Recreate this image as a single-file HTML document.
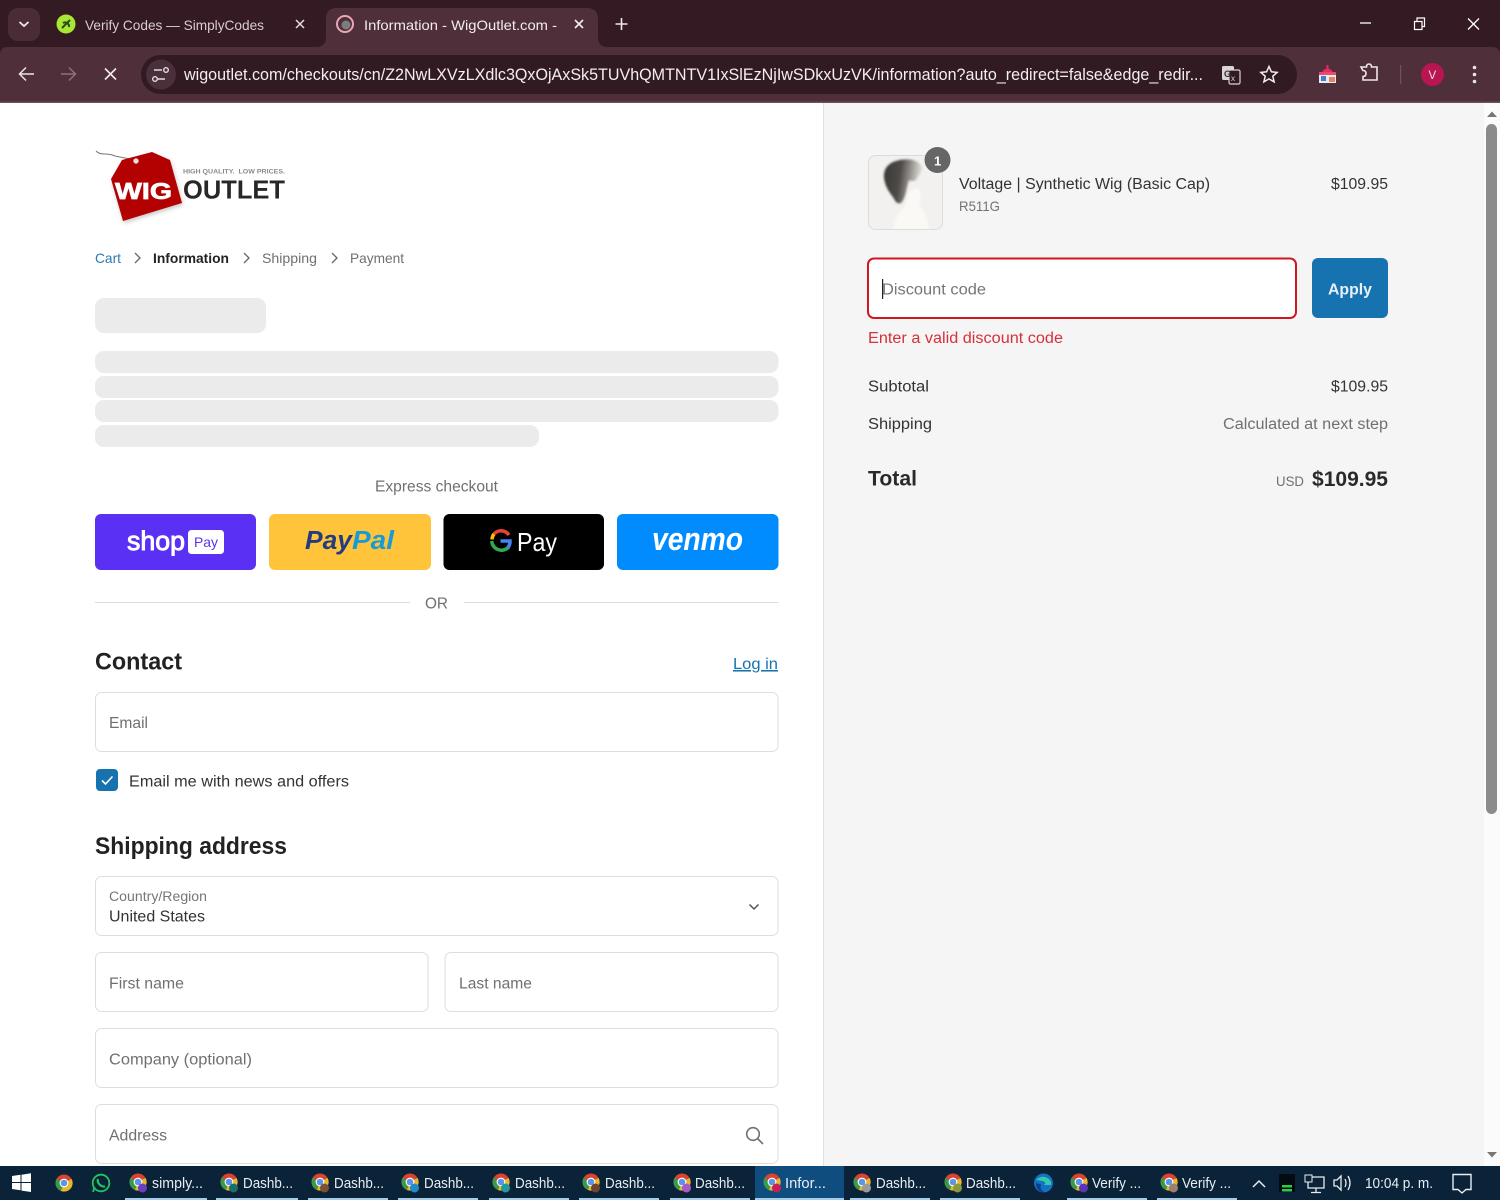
<!DOCTYPE html>
<html lang="en"><head><meta charset="utf-8"><title>Information - WigOutlet.com</title>
<style>
html,body{margin:0;padding:0;width:1500px;height:1200px;overflow:hidden;background:#fff}
svg{display:block}
text{font-family:"Liberation Sans",sans-serif;white-space:pre}
.m{fill:#fff;font-size:14px}
.t{font-size:15.5px;fill:#333}
.g{font-size:15.5px;fill:#707070}
.tb{font-size:14.5px;fill:#e8edf2}
</style></head><body>
<svg width="1500" height="1200" viewBox="0 0 1500 1200" xmlns="http://www.w3.org/2000/svg">
<defs>
<symbol id="ch" viewBox="0 0 18 18">
<circle cx="9" cy="9" r="8.5" fill="#d9432f"/>
<path d="M9 9 L1.6 4.8 A8.5 8.5 0 0 0 6 17 Z" fill="#3a9a4a"/>
<path d="M9 9 L16.6 5 A8.5 8.5 0 0 1 6 17 Z" fill="#eab62c"/>
<circle cx="9" cy="9" r="4.4" fill="#fff"/><circle cx="9" cy="9" r="3.3" fill="#5d95e6"/>
</symbol>
<linearGradient id="hair" x1="0" y1="0" x2="1" y2="0.15">
<stop offset="0" stop-color="#3a3735"/><stop offset=".45" stop-color="#4e4a47"/><stop offset=".75" stop-color="#a29e99"/><stop offset="1" stop-color="#e8e6e2"/>
</linearGradient>
<filter id="soft" x="-10%" y="-10%" width="120%" height="120%"><feGaussianBlur stdDeviation="1"/></filter>
<filter id="shadow" x="-10%" y="-10%" width="125%" height="125%"><feGaussianBlur stdDeviation="2"/></filter>
<clipPath id="thumb"><rect x="869" y="156" width="73" height="73" rx="6.500"/></clipPath>
</defs>

<!-- browser chrome -->
<rect width="1500" height="103" fill="#341a22"/>
<path d="M0 103V55q0-8 8-8h1484q8 0 8 8v48z" fill="#4f2f39"/>
<rect x="0" y="101.500" width="1500" height="1.500" fill="#6b5058"/>
<rect x="8" y="8" width="32" height="33" rx="10" fill="#4a2c36"/>
<path d="M19.500 22l4.500 4 4.500-4" fill="none" stroke="#f0e8ea" stroke-width="1.800"/>
<circle cx="66" cy="24" r="9.500" fill="#a8e832"/>
<path d="M62 28l8-8M63 23a4 4 0 0 1 6 4" fill="none" stroke="#2b4a22" stroke-width="2"/>
<text x="85" y="30" class="m" style="fill:#d9cdd1" textLength="179" lengthAdjust="spacingAndGlyphs">Verify Codes — SimplyCodes</text>
<path d="M296 20l8 8M304 20l-8 8" stroke="#e6dcdf" stroke-width="1.500"/>
<path d="M316 47q10 0 10-10V19q0-11 11-11h250q11 0 11 11v18q0 10 10 10z" fill="#4f2f39"/>
<circle cx="345" cy="24" r="8" fill="none" stroke="#eaa6b5" stroke-width="2"/>
<circle cx="346" cy="25" r="4.500" fill="#7b7c80"/>
<text x="364" y="30" class="m" style="fill:#f2ecee" textLength="193" lengthAdjust="spacingAndGlyphs">Information - WigOutlet.com -</text>
<path d="M575 20l8 8M583 20l-8 8" stroke="#f2ecee" stroke-width="1.600"/>
<path d="M621.500 18v12M615.500 24h12" stroke="#efe7e9" stroke-width="1.600"/>
<path d="M1360 23h11" stroke="#fff" stroke-width="1.300"/>
<path d="M1414.500 21.500h7.500v8h-7.500zM1417 21v-3h7.500v8.500h-2.500" fill="none" stroke="#fff" stroke-width="1.200"/>
<path d="M1468 18.500l11 11M1479 18.500l-11 11" stroke="#fff" stroke-width="1.300"/>

<path d="M34 74H20M26 67.500l-6.500 6.500 6.500 6.500" fill="none" stroke="#ece4e6" stroke-width="1.500"/>
<path d="M61 74h14M69 67.500l6.500 6.500-6.500 6.500" fill="none" stroke="#8a727a" stroke-width="1.500"/>
<path d="M105 68.500l11 11M116 68.500l-11 11" stroke="#f0e9eb" stroke-width="1.600"/>
<rect x="141" y="55" width="1156" height="39" rx="19.500" fill="#321a22"/>
<circle cx="161" cy="74.500" r="15" fill="#4a303a"/>
<path d="M154 70h8M157 79h8" stroke="#e5dde0" stroke-width="1.500"/>
<circle cx="166" cy="70" r="2.300" fill="none" stroke="#e5dde0" stroke-width="1.400"/>
<circle cx="155" cy="79" r="2.300" fill="none" stroke="#e5dde0" stroke-width="1.400"/>
<text x="184" y="80" style="fill:#f3eef0;font-size:16.500px" textLength="1019" lengthAdjust="spacingAndGlyphs">wigoutlet.com/checkouts/cn/Z2NwLXVzLXdlc3QxOjAxSk5TUVhQMTNTV1IxSlEzNjIwSDkxUzVK/information?auto_redirect=false&amp;edge_redir...</text>
<rect x="1222" y="66" width="12" height="14" rx="1.500" fill="#d9d4d5"/>
<rect x="1229" y="70" width="11" height="14" rx="1.500" fill="#321a22" stroke="#d9d4d5" stroke-width="1.200"/>
<text x="1224" y="77" style="font-size:9px;fill:#3a2a30;font-weight:bold">G</text>
<text x="1231" y="81" style="font-size:8px;fill:#d9d4d5">x</text>
<path d="M1269 66.500l2.400 5.300 5.700.6-4.300 3.800 1.300 5.700-5.100-3-5.100 3 1.300-5.700-4.300-3.800 5.700-.6z" fill="none" stroke="#f2ecee" stroke-width="1.500"/>
<rect x="1319" y="72" width="17" height="11" fill="#e7ecf4"/><rect x="1319" y="72" width="17" height="3" fill="#e84a70"/>
<rect x="1321" y="76" width="5" height="5" fill="#4b7bd1"/><rect x="1329" y="77" width="6" height="5" fill="#e8845a"/>
<path d="M1327.500 65v7M1323 72q4.500-5 9 0" stroke="#e62a62" fill="#e62a62" stroke-width="2"/>
<path d="M1362 68h5.500q0-3 2.500-3t2.500 3h5.500v13h-14v-3.500q3 0 3-3t-3-3z" transform="translate(-1 -1)" fill="none" stroke="#eee7e9" stroke-width="1.600"/>
<rect x="1400" y="65" width="1.300" height="19" fill="#6d525b"/>
<circle cx="1432.500" cy="74.500" r="11.500" fill="#b81552"/>
<text x="1428.500" y="79" style="font-size:11.500px;fill:#f5dbe5">V</text>
<circle cx="1474.500" cy="67.500" r="1.800" fill="#e9e3e5"/><circle cx="1474.500" cy="74.500" r="1.800" fill="#e9e3e5"/><circle cx="1474.500" cy="81.500" r="1.800" fill="#e9e3e5"/>

<!-- right panel -->
<rect x="824" y="103" width="676" height="1063" fill="#f5f5f5"/>
<rect x="823" y="103" width="1" height="1063" fill="#e1e1e1"/>
<rect x="1484" y="103" width="16" height="1063" fill="#fff" opacity=".55"/>
<path d="M1487 117l5-5.500 5 5.500z" fill="#777"/>
<rect x="1486" y="124" width="11" height="690" rx="5.500" fill="#8b8b8b"/>
<path d="M1487 1152l5 5.500 5-5.500z" fill="#777"/>

<!-- product -->
<rect x="868.500" y="155.500" width="74" height="74" rx="7" fill="#f2f1ef" stroke="#dcdcdc"/>
<g clip-path="url(#thumb)">
<g filter="url(#soft)">
<path d="M893 230q2-16 12-23l4-15 8-5 4 6-2 12q8 8 10 25z" fill="#faf9f5"/>
<path d="M884 178q-1-11 9-16 10-4 20-2 7 2 10 9-4 6-7 11-5 2-7 0-2 6-3 12-2 8-5 11-3 1-5-1-3-5-6-9-5-7-6-15z" fill="url(#hair)"/>
</g>
</g>
<circle cx="937.500" cy="160" r="13" fill="#666"/>
<text x="934" y="165.500" style="font-size:13px;font-weight:bold;fill:#fff">1</text>
<text x="959" y="189" class="t" textLength="251" lengthAdjust="spacingAndGlyphs">Voltage | Synthetic Wig (Basic Cap)</text>
<text x="959" y="211" style="font-size:14px;fill:#737373" textLength="41" lengthAdjust="spacingAndGlyphs">R511G</text>
<text x="1331" y="189" class="t" textLength="57" lengthAdjust="spacingAndGlyphs">$109.95</text>

<rect x="868" y="258.500" width="428" height="59.500" rx="6" fill="#fff" stroke="#d0161f" stroke-width="2"/>
<rect x="882" y="279" width="1.200" height="20" fill="#222"/>
<text x="882" y="294.500" class="g" style="fill:#767676" textLength="104" lengthAdjust="spacingAndGlyphs">Discount code</text>
<rect x="1312" y="258" width="76" height="60" rx="6" fill="#1773b0"/>
<text x="1328" y="294.500" style="font-size:16px;font-weight:bold;fill:#e6f0f8" textLength="44" lengthAdjust="spacingAndGlyphs">Apply</text>
<text x="868" y="343" style="font-size:15.500px;fill:#d6303a" textLength="195" lengthAdjust="spacingAndGlyphs">Enter a valid discount code</text>
<text x="868" y="391.500" class="t" textLength="61" lengthAdjust="spacingAndGlyphs">Subtotal</text>
<text x="1331" y="391.500" class="t" textLength="57" lengthAdjust="spacingAndGlyphs">$109.95</text>
<text x="868" y="429" class="t" textLength="64" lengthAdjust="spacingAndGlyphs">Shipping</text>
<text x="1223" y="429" class="g" textLength="165" lengthAdjust="spacingAndGlyphs">Calculated at next step</text>
<text x="868" y="485.500" style="font-size:21px;font-weight:bold;fill:#2a2a2a" textLength="49" lengthAdjust="spacingAndGlyphs">Total</text>
<text x="1276" y="486" style="font-size:13.500px;fill:#707070" textLength="28" lengthAdjust="spacingAndGlyphs">USD</text>
<text x="1312" y="486" style="font-size:21px;font-weight:bold;fill:#2a2a2a" textLength="76" lengthAdjust="spacingAndGlyphs">$109.95</text>

<!-- logo -->
<path d="M96 151q3 3 8 3 7 0 11 2 10 2 20 4" fill="none" stroke="#777" stroke-width="1"/>
<path d="M111 179l11-19 30-8 18 8 12 43-59 18z" transform="translate(1 2)" fill="#999" opacity=".55" filter="url(#shadow)"/>
<path d="M111 179l11-19 30-8 18 8 12 43-59 18z" fill="#b30000"/>
<circle cx="136" cy="161" r="2.700" fill="#e9dcdc"/>
<text x="115" y="199" style="font-size:23px;font-weight:bold;fill:#fff;stroke:#fff;stroke-width:.7" textLength="57" lengthAdjust="spacingAndGlyphs">WIG</text>
<text x="183" y="173.500" style="font-size:6.500px;font-weight:bold;fill:#8a8a8a" textLength="102" lengthAdjust="spacingAndGlyphs">HIGH QUALITY.  LOW PRICES.</text>
<text x="183" y="198.500" style="font-size:25.500px;font-weight:bold;fill:#272727" textLength="102" lengthAdjust="spacingAndGlyphs">OUTLET</text>

<!-- breadcrumb -->
<text x="95" y="263" style="font-size:14px;fill:#2d79b0" textLength="26" lengthAdjust="spacingAndGlyphs">Cart</text>
<path d="M135 253l5 5-5 5M244 253l5 5-5 5M332 253l5 5-5 5" fill="none" stroke="#666" stroke-width="1.300"/>
<text x="153" y="263" style="font-size:14px;fill:#222;font-weight:bold" textLength="76" lengthAdjust="spacingAndGlyphs">Information</text>
<text x="262" y="263" style="font-size:14px;fill:#707070" textLength="55" lengthAdjust="spacingAndGlyphs">Shipping</text>
<text x="350" y="263" style="font-size:14px;fill:#707070" textLength="54" lengthAdjust="spacingAndGlyphs">Payment</text>

<!-- skeleton -->
<rect x="95" y="298" width="171" height="35" rx="9" fill="#ebebeb"/>
<rect x="95" y="351" width="683.500" height="22" rx="9" fill="#ebebeb"/>
<rect x="95" y="376" width="683.500" height="22" rx="9" fill="#ebebeb"/>
<rect x="95" y="400" width="683.500" height="22" rx="9" fill="#ebebeb"/>
<rect x="95" y="425" width="444" height="22" rx="9" fill="#ebebeb"/>
<text x="375" y="491.500" class="g" textLength="123" lengthAdjust="spacingAndGlyphs">Express checkout</text>

<!-- express buttons -->
<rect x="95" y="514" width="161" height="56" rx="6" fill="#5a31f4"/>
<text x="127" y="550" style="font-size:27px;fill:#fff;stroke:#fff;stroke-width:.9" textLength="58" lengthAdjust="spacingAndGlyphs">shop</text>
<rect x="188" y="530" width="36" height="24" rx="3.500" fill="#fff"/>
<text x="194" y="547" style="font-size:14px;fill:#5a31f4" textLength="24" lengthAdjust="spacingAndGlyphs">Pay</text>
<rect x="269" y="514" width="162" height="56" rx="6" fill="#ffc439"/>
<text x="305" y="549" style="font-size:25.500px;font-weight:bold;font-style:italic;fill:#253b80" textLength="47" lengthAdjust="spacingAndGlyphs">Pay</text>
<text x="352" y="549" style="font-size:25.500px;font-weight:bold;font-style:italic;fill:#179bd7" textLength="42" lengthAdjust="spacingAndGlyphs">Pal</text>
<rect x="443.500" y="514" width="160.500" height="56" rx="6" fill="#000"/>
<g fill="none" stroke-width="3.500">
<path d="M509 535a9.500 9.500 0 0 0-15-1" stroke="#ea4335"/>
<path d="M494 534a9.500 9.500 0 0 0-2 5.500" stroke="#fbbc04"/>
<path d="M491.800 541a9.500 9.500 0 0 0 5 8" stroke="#34a853"/>
<path d="M496 548.500a9.500 9.500 0 0 0 13-2" stroke="#34a853"/>
<path d="M507.500 548a9.500 9.500 0 0 0 2.500-7h-9.500" stroke="#4285f4"/>
</g>
<text x="517" y="551" style="font-size:26px;fill:#fff" textLength="40" lengthAdjust="spacingAndGlyphs">Pay</text>
<rect x="617" y="514" width="161.500" height="56" rx="6" fill="#008cff"/>
<text x="652" y="550" style="font-size:32px;font-weight:bold;font-style:italic;fill:#fff" textLength="91" lengthAdjust="spacingAndGlyphs">venmo</text>

<rect x="95" y="602" width="315" height="1" fill="#dedede"/>
<rect x="464" y="602" width="314.500" height="1" fill="#dedede"/>
<text x="425" y="608.500" class="g" textLength="23" lengthAdjust="spacingAndGlyphs">OR</text>

<!-- contact -->
<text x="95" y="669.500" style="font-size:24px;font-weight:bold;fill:#222;stroke:#fff;stroke-width:.6;paint-order:stroke" textLength="87" lengthAdjust="spacingAndGlyphs">Contact</text>
<text x="733" y="669" style="font-size:15.500px;fill:#1773b0;text-decoration:underline" textLength="45" lengthAdjust="spacingAndGlyphs">Log in</text>
<rect x="95.500" y="692.500" width="682.500" height="59" rx="6" fill="#fff" stroke="#dedede"/>
<text x="109" y="728" class="g" textLength="39" lengthAdjust="spacingAndGlyphs">Email</text>
<rect x="96" y="769" width="22" height="22" rx="4" fill="#1773b0"/>
<path d="M102 780.500l3.500 3.500 7-7.500" fill="none" stroke="#fff" stroke-width="1.600"/>
<text x="129" y="786.500" class="t" textLength="220" lengthAdjust="spacingAndGlyphs">Email me with news and offers</text>

<text x="95" y="854" style="font-size:24px;font-weight:bold;fill:#222;stroke:#fff;stroke-width:.6;paint-order:stroke" textLength="192" lengthAdjust="spacingAndGlyphs">Shipping address</text>
<rect x="95.500" y="876.500" width="682.500" height="59" rx="6" fill="#fff" stroke="#dedede"/>
<text x="109" y="901" style="font-size:13.500px;fill:#767676" textLength="98" lengthAdjust="spacingAndGlyphs">Country/Region</text>
<text x="109" y="921.500" class="t" textLength="96" lengthAdjust="spacingAndGlyphs">United States</text>
<path d="M749.500 904.500l4.500 4.500 4.500-4.500" fill="none" stroke="#555" stroke-width="1.500"/>
<rect x="95.500" y="952.500" width="332.500" height="59" rx="6" fill="#fff" stroke="#dedede"/>
<text x="109" y="988.500" class="g" textLength="75" lengthAdjust="spacingAndGlyphs">First name</text>
<rect x="445" y="952.500" width="333" height="59" rx="6" fill="#fff" stroke="#dedede"/>
<text x="459" y="988.500" class="g" textLength="73" lengthAdjust="spacingAndGlyphs">Last name</text>
<rect x="95.500" y="1028.500" width="682.500" height="59" rx="6" fill="#fff" stroke="#dedede"/>
<text x="109" y="1064.500" class="g" textLength="143" lengthAdjust="spacingAndGlyphs">Company (optional)</text>
<rect x="95.500" y="1104.500" width="682.500" height="59" rx="6" fill="#fff" stroke="#dedede"/>
<text x="109" y="1140.500" class="g" textLength="58" lengthAdjust="spacingAndGlyphs">Address</text>
<circle cx="753" cy="1134" r="6.300" fill="none" stroke="#707070" stroke-width="1.600"/>
<path d="M757.500 1138.500l5.500 5.500" stroke="#707070" stroke-width="1.600"/>

<!-- taskbar -->
<rect y="1166" width="1500" height="34" fill="#0a2338"/>
<rect x="755" y="1166" width="89" height="34" fill="#0f4d7f"/>
<g fill="#a4cbe8">
<rect x="125" y="1198" width="82" height="2"/><rect x="216" y="1198" width="82" height="2"/><rect x="308" y="1198" width="80" height="2"/><rect x="398" y="1198" width="80" height="2"/><rect x="489" y="1198" width="80" height="2"/><rect x="579" y="1198" width="80" height="2"/><rect x="670" y="1198" width="80" height="2"/><rect x="755" y="1198" width="89" height="2"/><rect x="850" y="1198" width="80" height="2"/><rect x="940" y="1198" width="80" height="2"/><rect x="1067" y="1198" width="80" height="2"/><rect x="1157" y="1198" width="80" height="2"/>
</g>
<path d="M12 1176l8.500-1.200v7.200H12zM21.500 1174.700l9.500-1.500v8.800h-9.500zM12 1183h8.500v7.200L12 1189zM21.500 1183H31v9l-9.500-1.400z" fill="#fff"/>
<use href="#ch" x="55" y="1174" width="18" height="18"/>
<circle cx="101" cy="1183" r="8.300" fill="none" stroke="#22c55e" stroke-width="1.800"/>
<path d="M93 1192l1.500-5" stroke="#22c55e" stroke-width="1.800"/>
<path d="M98 1179q-1 3 1.500 5.500t5.500 2" fill="none" stroke="#22c55e" stroke-width="2.200"/>

<use href="#ch" x="129" y="1173" width="18" height="18"/><circle cx="142.500" cy="1188" r="4.500" fill="#6a3fc0"/>
<text x="152" y="1188" class="tb" textLength="51" lengthAdjust="spacingAndGlyphs">simply...</text>
<use href="#ch" x="220" y="1173" width="18" height="18"/><circle cx="233.500" cy="1188" r="4.500" fill="#1b6f6a"/>
<text x="243" y="1188" class="tb" textLength="50" lengthAdjust="spacingAndGlyphs">Dashb...</text>
<use href="#ch" x="311" y="1173" width="18" height="18"/><circle cx="324.500" cy="1188" r="4.500" fill="#7b5236"/>
<text x="334" y="1188" class="tb" textLength="50" lengthAdjust="spacingAndGlyphs">Dashb...</text>
<use href="#ch" x="401" y="1173" width="18" height="18"/><circle cx="414.500" cy="1188" r="4.500" fill="#2389c9"/>
<text x="424" y="1188" class="tb" textLength="50" lengthAdjust="spacingAndGlyphs">Dashb...</text>
<use href="#ch" x="492" y="1173" width="18" height="18"/><circle cx="505.500" cy="1188" r="4.500" fill="#1f9a9e"/>
<text x="515" y="1188" class="tb" textLength="50" lengthAdjust="spacingAndGlyphs">Dashb...</text>
<use href="#ch" x="582" y="1173" width="18" height="18"/><circle cx="595.500" cy="1188" r="4.500" fill="#6d4530"/>
<text x="605" y="1188" class="tb" textLength="50" lengthAdjust="spacingAndGlyphs">Dashb...</text>
<use href="#ch" x="673" y="1173" width="18" height="18"/><circle cx="686.500" cy="1188" r="4.500" fill="#a45ac8"/>
<text x="695" y="1188" class="tb" textLength="50" lengthAdjust="spacingAndGlyphs">Dashb...</text>
<use href="#ch" x="763" y="1173" width="18" height="18"/><circle cx="776.500" cy="1188" r="4.500" fill="#c81e5a"/>
<text x="785" y="1188" class="tb" textLength="41" lengthAdjust="spacingAndGlyphs">Infor...</text>
<use href="#ch" x="853" y="1173" width="18" height="18"/><circle cx="866.500" cy="1188" r="4.500" fill="#9a9a9a"/>
<text x="876" y="1188" class="tb" textLength="50" lengthAdjust="spacingAndGlyphs">Dashb...</text>
<use href="#ch" x="944" y="1173" width="18" height="18"/><circle cx="957.500" cy="1188" r="4.500" fill="#8a9a3a"/>
<text x="966" y="1188" class="tb" textLength="50" lengthAdjust="spacingAndGlyphs">Dashb...</text>
<circle cx="1043.500" cy="1183" r="9.500" fill="#1471c4"/>
<path d="M1036 1180q6-6 13-1 3 3 2 6h-7q3-3-2-4-4-1-6-1z" fill="#33c9a8"/>
<path d="M1036 1183q0 9 9 9.500-6-3-4-8z" fill="#0b3f87"/>
<use href="#ch" x="1070" y="1173" width="18" height="18"/><circle cx="1083.500" cy="1188" r="4.500" fill="#5b35b8"/>
<text x="1092" y="1188" class="tb" textLength="49" lengthAdjust="spacingAndGlyphs">Verify ...</text>
<use href="#ch" x="1160" y="1173" width="18" height="18"/><circle cx="1173.500" cy="1188" r="4.500" fill="#9a8070"/>
<text x="1182" y="1188" class="tb" textLength="49" lengthAdjust="spacingAndGlyphs">Verify ...</text>
<path d="M1253 1187l6-6 6 6" fill="none" stroke="#e8edf2" stroke-width="1.500"/>
<rect x="1279" y="1174" width="16" height="18" fill="#050b10"/>
<rect x="1282" y="1185" width="10" height="2.500" fill="#2ecc40"/><rect x="1282" y="1189" width="10" height="2.500" fill="#2ecc40"/>
<path d="M1308 1177h16v11h-16zM1316 1188v4M1311 1192.500h10" fill="none" stroke="#e8edf2" stroke-width="1.300"/>
<rect x="1305" y="1175" width="7" height="7" fill="#0a2338" stroke="#e8edf2"/>
<path d="M1334 1180h3l4-4v14l-4-4h-3zM1345 1179q2 4 0 8M1348 1176q4 7 0 14" fill="none" stroke="#e8edf2" stroke-width="1.300"/>
<text x="1365" y="1188" class="tb" textLength="68" lengthAdjust="spacingAndGlyphs">10:04 p. m.</text>
<path d="M1453 1174.500h18v15h-5l-4 3.500-4-3.500h-5z" fill="none" stroke="#e8edf2" stroke-width="1.400"/>
</svg>
</body></html>
